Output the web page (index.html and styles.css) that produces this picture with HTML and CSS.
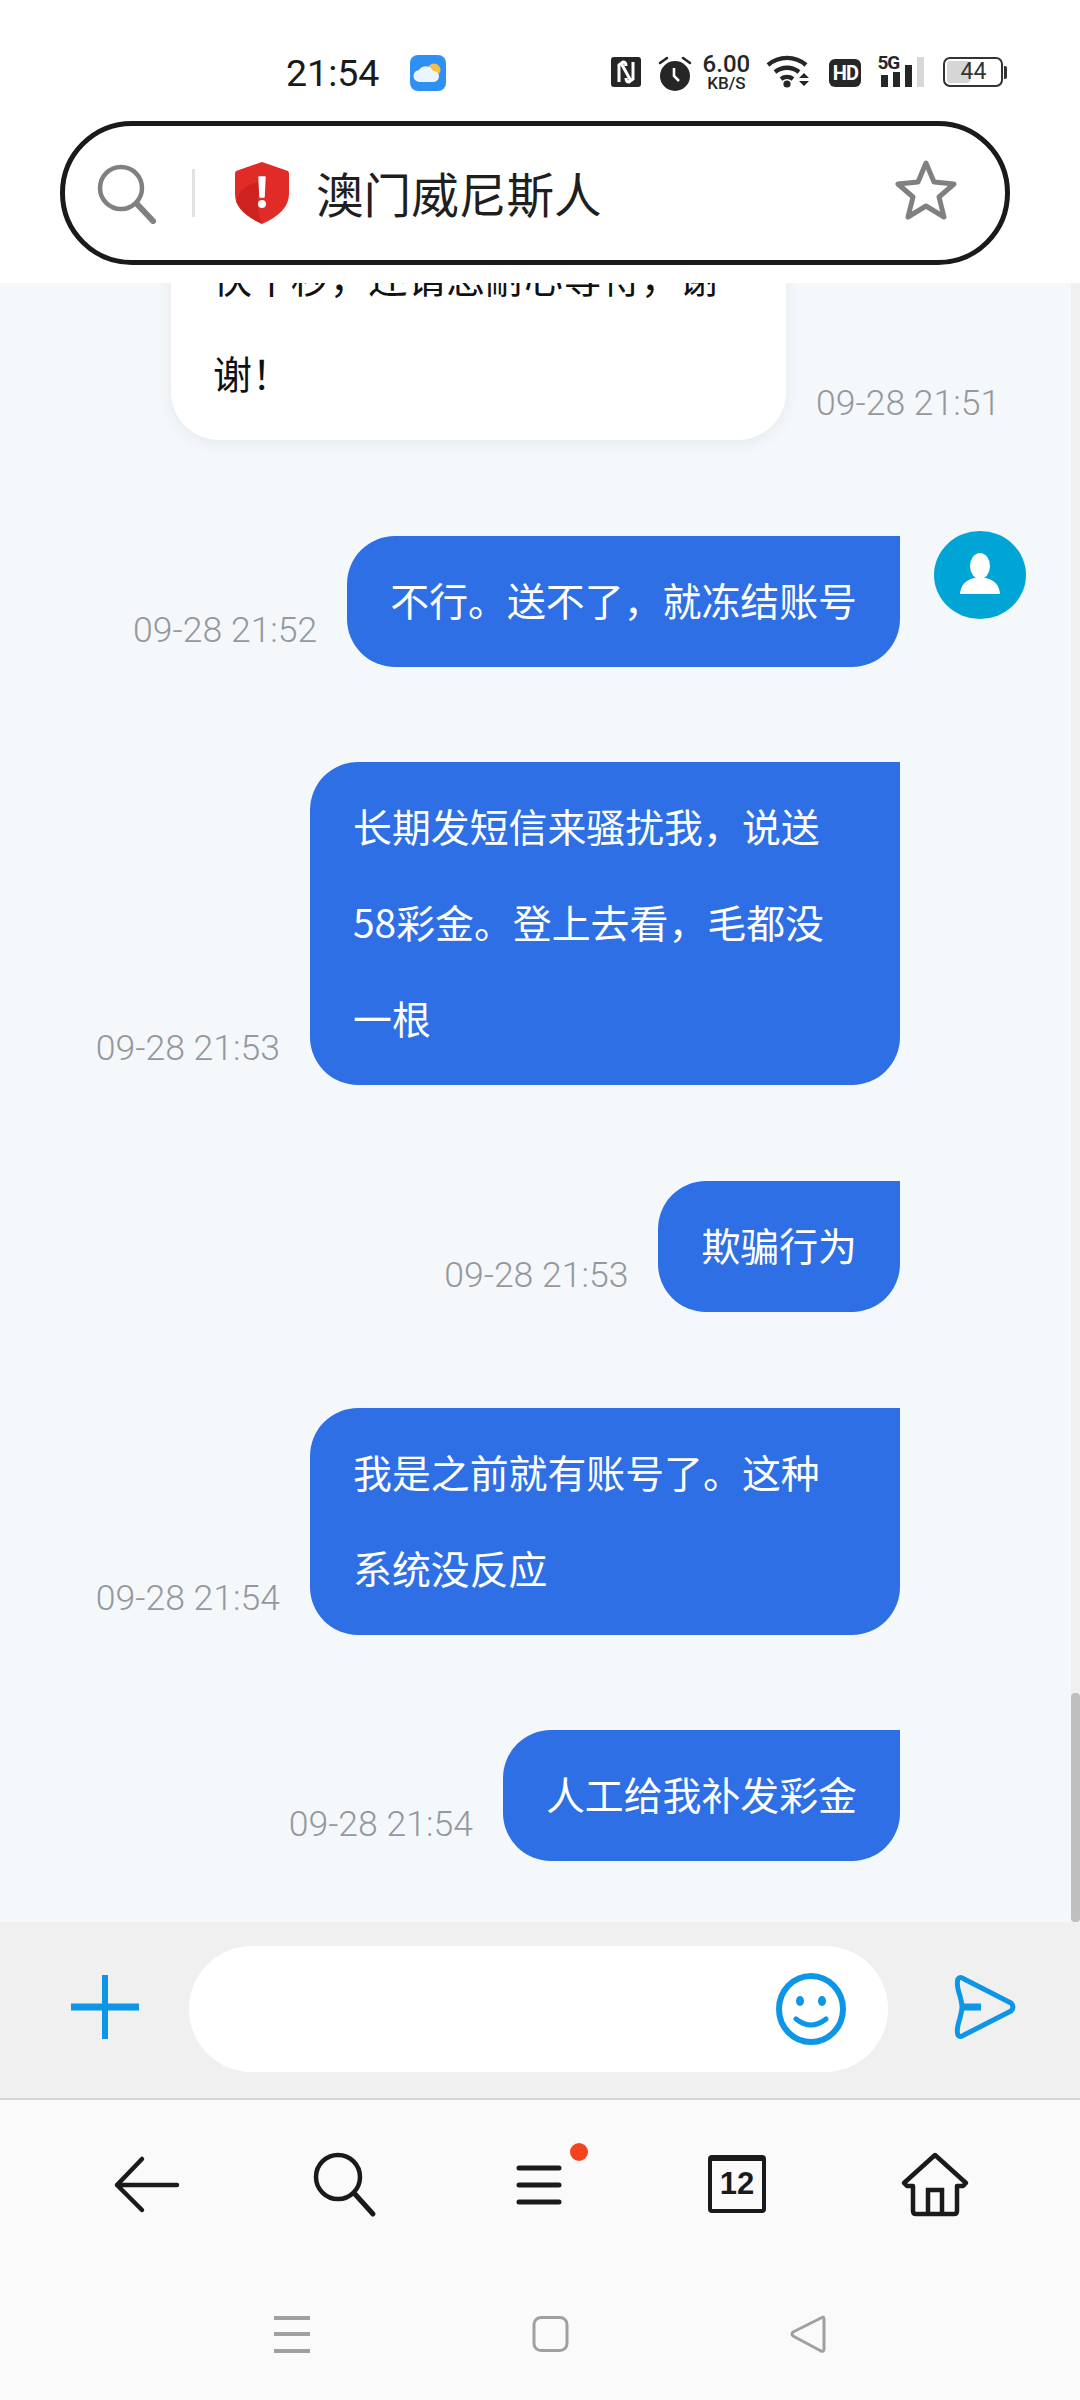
FILE: index.html
```html
<!DOCTYPE html>
<html lang="zh-CN">
<head>
    <meta charset="UTF-8">
    <meta name="viewport" content="width=device-width, initial-scale=1.0">
    <title>澳门威尼斯人</title>
    <link rel="stylesheet" href="styles.css">
</head>
<body>
    <!-- Barre d'état + barre d'adresse -->
    <header class="top">
        <div class="status">
            <span class="clock">21:54</span>
            <svg class="st-weather" width="36" height="36" viewBox="0 0 36 36">
                <rect width="36" height="36" rx="8" fill="#2e8ff5"/>
                <circle cx="24" cy="15" r="6.500" fill="#f5bf42"/>
                <path d="M10 27a6 6 0 0 1-1-12 8 8 0 0 1 14 1 5.500 5.500 0 0 1 1 11z" fill="#eaf5ff"/>
            </svg>
            <div class="status-right">
                <svg width="30" height="30" viewBox="0 0 30 30">
                    <rect width="30" height="30" rx="3" fill="#262626"/>
                    <path d="M8 25V8l4-3q3 0 3 4M22 5v17l-4 3q-3 0-3-4M10 6l10 18" fill="none" stroke="#fff" stroke-width="3"/>
                </svg>
                <svg class="st-alarm" width="34" height="36" viewBox="0 0 34 36">
                    <circle cx="17" cy="21" r="15" fill="#262626"/>
                    <path d="M2 8l7-5M32 8l-7-5" stroke="#262626" stroke-width="2.600" stroke-linecap="round"/>
                    <path d="M16 13v8l5 5" fill="none" stroke="#fff" stroke-width="2.600"/>
                </svg>
                <div class="speed"><span class="speed-num">6.00</span><span class="speed-unit">KB/S</span></div>
                <svg class="st-wifi" width="46" height="34" viewBox="0 0 46 34">
                    <g fill="none" stroke="#262626" stroke-width="4.400">
                        <path d="M2 11a29 29 0 0 1 38 0"/>
                        <path d="M9 18a19 19 0 0 1 24 0"/>
                        <path d="M15 25a10 10 0 0 1 12 0"/>
                    </g>
                    <circle cx="21" cy="30" r="3.600" fill="#262626"/>
                    <path d="M33 24l5-5 5 5zM33 27l5 5 5-5z" fill="#262626"/>
                </svg>
                <span class="st-hd">HD</span>
                <div class="signal">
                    <span class="signal-5g">5G</span>
                    <i class="bar bar-1"></i><i class="bar bar-2"></i><i class="bar bar-3"></i><i class="bar bar-4"></i>
                </div>
                <div class="battery">
                    <div class="battery-box"><div class="battery-fill" style="width:44%"></div><span class="battery-num">44</span></div>
                    <i class="battery-tip"></i>
                </div>
            </div>
        </div>

        <div class="addr">
            <svg class="addr-search" width="60" height="60" viewBox="0 0 60 60">
                <circle cx="25" cy="24" r="21" fill="none" stroke="#808080" stroke-width="4.500"/>
                <path d="M41 40l16 17" stroke="#808080" stroke-width="6" stroke-linecap="round"/>
            </svg>
            <i class="addr-sep"></i>
            <svg class="addr-shield" width="54" height="62" viewBox="0 0 54 62">
                <path d="M27 0l26 9q1 1 1 3v20q0 18-27 30Q0 50 0 32V12q0-2 1-3z" fill="#e02b27"/>
                <path d="M1 40Q6 20 32 19 16 30 27 62 6 52 1 40z" fill="#bf1c1c" opacity=".55"/>
                <path d="M24 15h6l-1 20h-4z" fill="#fff" stroke="#fff" stroke-width="1.500" stroke-linejoin="round"/>
                <circle cx="27" cy="42" r="4" fill="#fff"/>
            </svg>
            <span class="addr-title">澳门威尼斯人</span>
            <svg class="addr-star" width="62" height="60" viewBox="0 0 62 60">
                <path d="M31 3l8 19 20 2-15 13 5 20-18-11-18 11 5-20L3 24l20-2z" fill="none" stroke="#808080" stroke-width="5" stroke-linejoin="round"/>
            </svg>
        </div>
    </header>

    <!-- Messages -->
    <main class="chat">
        <div class="msgs">
            <div class="row row-in">
                <div class="bubble bubble-in">快十秒，还请您耐心等待，谢谢！</div>
                <span class="time">09-28 21:51</span>
            </div>
            <div class="row row-first">
                <span class="time">09-28 21:52</span>
                <div class="bubble bubble-out">不行。送不了，就冻结账号</div>
                <div class="avatar-slot">
                    <svg class="avatar" width="92" height="88" viewBox="0 0 92 88">
                        <ellipse cx="46" cy="44" rx="46" ry="44" fill="#00a5d6"/>
                        <ellipse cx="46" cy="35" rx="10" ry="13" fill="#fff"/>
                        <path d="M26 63q1-13 14-16h12q13 3 14 16z" fill="#fff"/>
                    </svg>
                </div>
            </div>
            <div class="row">
                <span class="time">09-28 21:53</span>
                <div class="bubble bubble-out bubble-wide">长期发短信来骚扰我，说送58彩金。登上去看，毛都没一根</div>
                <div class="avatar-slot"></div>
            </div>
            <div class="row">
                <span class="time">09-28 21:53</span>
                <div class="bubble bubble-out">欺骗行为</div>
                <div class="avatar-slot"></div>
            </div>
            <div class="row">
                <span class="time">09-28 21:54</span>
                <div class="bubble bubble-out bubble-wide">我是之前就有账号了。这种系统没反应</div>
                <div class="avatar-slot"></div>
            </div>
            <div class="row">
                <span class="time">09-28 21:54</span>
                <div class="bubble bubble-out">人工给我补发彩金</div>
                <div class="avatar-slot"></div>
            </div>
        </div>
        <div class="scroll-track"><div class="scroll-thumb"></div></div>
    </main>

    <!-- Saisie -->
    <section class="composer">
        <svg class="cp-plus" width="68" height="64" viewBox="0 0 68 64">
            <path d="M34 0v64" stroke="#0d96e8" stroke-width="6"/>
            <path d="M0 32h68" stroke="#0d96e8" stroke-width="7"/>
        </svg>
        <div class="cp-input">
            <svg width="70" height="72" viewBox="0 0 70 72">
                <ellipse cx="35" cy="36" rx="32" ry="33" fill="none" stroke="#0d96e8" stroke-width="6"/>
                <ellipse cx="24" cy="28" rx="4" ry="5" fill="#0d96e8"/>
                <ellipse cx="46" cy="28" rx="4" ry="5" fill="#0d96e8"/>
                <path d="M20 46q15 12 30 0" fill="none" stroke="#0d96e8" stroke-width="5" stroke-linecap="round"/>
            </svg>
        </div>
        <svg class="cp-send" width="64" height="64" viewBox="0 0 64 64">
            <path d="M5 4q2-3 6 0l47 24q4 4 0 8L11 60q-4 3-6 0-2-5 2-17 2-8 2-11t-2-11Q3 9 5 4z" fill="none" stroke="#0d96e8" stroke-width="5" stroke-linejoin="round"/>
            <path d="M9 32h19" stroke="#0d96e8" stroke-width="7"/>
        </svg>
    </section>

    <!-- Barre d'outils du navigateur -->
    <nav class="toolbar">
        <svg width="72" height="72" viewBox="0 0 72 72">
            <path d="M66 36H6M31 10L6 36l25 25" fill="none" stroke="#1a1a1a" stroke-width="4.500" stroke-linecap="round" stroke-linejoin="round"/>
        </svg>
        <svg width="72" height="72" viewBox="0 0 72 72">
            <circle cx="30" cy="28" r="22" fill="none" stroke="#1a1a1a" stroke-width="4.500"/>
            <path d="M46 44l19 21" stroke="#1a1a1a" stroke-width="5" stroke-linecap="round"/>
        </svg>
        <div class="menu-icon">
            <svg width="72" height="72" viewBox="0 0 72 72">
                <path d="M14 19h40M14 36h40M14 53h40" stroke="#1a1a1a" stroke-width="5" stroke-linecap="round"/>
            </svg>
            <i class="menu-dot"></i>
        </div>
        <div class="tabs-icon"><span>12</span></div>
        <svg width="72" height="72" viewBox="0 0 72 72">
            <path d="M5 34L36 6l31 28-3 3h-6v25q0 3-3 3H17q-3 0-3-3V37H8z" fill="none" stroke="#1a1a1a" stroke-width="4.500" stroke-linejoin="round"/>
            <path d="M29 65V41h14v24" fill="none" stroke="#1a1a1a" stroke-width="4.500"/>
        </svg>
    </nav>

    <!-- Navigation système -->
    <footer class="sysnav">
        <svg width="40" height="40" viewBox="0 0 40 40">
            <path d="M2 4h36M2 20h36M2 37h36" stroke="#a0a0a0" stroke-width="4"/>
        </svg>
        <svg width="40" height="40" viewBox="0 0 40 40">
            <rect x="4" y="3.500" width="33" height="33" rx="7" fill="none" stroke="#a0a0a0" stroke-width="3"/>
        </svg>
        <svg width="40" height="40" viewBox="0 0 40 40">
            <path d="M36 5q0-3-3-1L5 18q-2 2 0 4l28 15q3 1 3-2z" fill="none" stroke="#a0a0a0" stroke-width="3" stroke-linejoin="round"/>
        </svg>
    </footer>
</body>
</html>
```

FILE: styles.css
```css
:root {
    --bubble-blue: #2e6fe5;
    --chat-bg: #f4f8fb;
    --text-dark: #262626;
    --time-grey: #94989d;
}

* {
    box-sizing: border-box;
}

body {
    margin: 0;
    width: 1080px;
    height: 2400px;
    display: flex;
    flex-direction: column;
    overflow: hidden;
    background: #fafafa;
    font-family: "Noto Sans CJK SC", "Noto Sans", sans-serif;
}

.top {
    height: 283px;
    background: #fff;
    position: relative;
    z-index: 2;
}

/* Barre d'état */
.status {
    height: 121px;
    padding: 54px 0 0 286px;
    display: flex;
    align-items: flex-start;
}

.clock {
    font-family: Roboto, sans-serif;
    font-size: 37.500px;
    font-weight: 400;
    line-height: 38px;
    color: #1a1a1a;
}

.st-weather {
    margin: 1px 0 0 31px;
}

.status-right {
    margin-left: 165px;
    display: flex;
    align-items: flex-start;
    color: var(--text-dark);
    font-family: Roboto, sans-serif;
}

.status-right svg {
    margin-top: 3px;
}

.status-right .st-alarm {
    margin: 1px 0 0 17px;
}

.speed {
    margin-left: 8px;
    width: 52px;
    display: flex;
    flex-direction: column;
    align-items: center;
}

.speed-num {
    font-size: 24px;
    font-weight: 500;
    line-height: 21px;
}

.speed-unit {
    font-size: 17px;
    font-weight: 500;
    line-height: 16px;
}

.status-right .st-wifi {
    margin: 0 0 0 14px;
}

.st-hd {
    margin: 5px 0 0 17px;
    width: 32px;
    height: 28px;
    border-radius: 6px;
    background: var(--text-dark);
    color: #fff;
    font-size: 20px;
    font-weight: 700;
    line-height: 28px;
    letter-spacing: -1px;
    text-align: center;
}

.signal {
    margin: 2px 0 0 16px;
    width: 47px;
    height: 31px;
    display: flex;
    align-items: flex-end;
    gap: 5px;
    position: relative;
}

.signal-5g {
    position: absolute;
    left: 0;
    top: -3px;
    font-size: 19px;
    font-weight: 700;
    line-height: 19px;
    letter-spacing: -1px;
}

.bar {
    width: 7px;
    background: var(--text-dark);
}

.bar-1 { height: 12px; margin-left: 4px; }
.bar-2 { height: 15px; }
.bar-3 { height: 22px; }
.bar-4 { height: 30px; background: #d8d8d8; }

.battery {
    margin: 3px 0 0 19px;
    display: flex;
    align-items: center;
}

.battery-box {
    width: 60px;
    height: 30px;
    border: 2.500px solid #333;
    border-radius: 7px;
    padding: 2px;
    position: relative;
}

.battery-fill {
    height: 100%;
    background: #d6d6d6;
    border-radius: 3px;
}

.battery-num {
    position: absolute;
    inset: 0;
    text-align: center;
    font-size: 23px;
    line-height: 25px;
    color: #333;
}

.battery-tip {
    width: 3px;
    height: 13px;
    margin-left: 1px;
    background: #333;
    border-radius: 0 2px 2px 0;
}

/* Barre d'adresse */
.addr {
    margin: 0 70px 0 60px;
    height: 144px;
    border: 5px solid #1a1a1a;
    border-radius: 72px;
    background: #fff;
    display: flex;
    align-items: center;
    padding: 0 48px 0 31px;
}

.addr-search {
    flex: none;
    margin-top: 2px;
}

.addr-sep {
    width: 3px;
    height: 48px;
    margin-left: 36px;
    background: #e2e2e2;
}

.addr-shield {
    flex: none;
    margin-left: 40px;
}

.addr-title {
    margin-left: 27px;
    font-size: 47.600px;
    line-height: 60px;
    color: #1f1f1f;
}

.addr-star {
    flex: none;
    margin: 0 0 6px auto;
}

/* Messages */
.chat {
    height: 1639px;
    background: var(--chat-bg);
    overflow: hidden;
    position: relative;
}

.msgs {
    margin-top: -70px;
    display: flex;
    flex-direction: column;
    gap: 95.700px;
}

.row {
    display: flex;
    justify-content: flex-end;
    align-items: flex-end;
}

.row-in {
    justify-content: flex-start;
    padding-left: 171px;
}

.bubble {
    padding: 15px 43px 20px;
    font-size: 38.900px;
    line-height: 96px;
    border-radius: 48px;
}

.bubble-in {
    width: 615px;
    padding-left: 42px;
    background: #fff;
    color: #111;
    box-shadow: 0 4px 14px rgba(60, 80, 100, 0.08);
}

.bubble-out {
    background: var(--bubble-blue);
    color: #fff;
    border-top-right-radius: 0;
}

.bubble-wide {
    width: 590px;
}

.time {
    margin: 0 30px 17px;
    font-family: Roboto, sans-serif;
    font-size: 35.600px;
    font-weight: 300;
    line-height: 40px;
    color: var(--time-grey);
    white-space: nowrap;
}

.avatar-slot {
    width: 180px;
    flex: none;
    align-self: flex-start;
}

.avatar {
    display: block;
    margin: -5px 0 0 34px;
}

.scroll-track {
    position: absolute;
    top: 0;
    bottom: 0;
    right: 0;
    width: 9px;
    background: #f0f0f0;
}

.scroll-thumb {
    position: absolute;
    right: 0;
    bottom: 0;
    width: 9px;
    height: 229px;
    background: #bfbfbf;
    border-radius: 4px;
}

/* Saisie */
.composer {
    height: 178px;
    background: #f0f0f0;
    border-bottom: 2px solid #d4d4d4;
    display: flex;
    align-items: flex-start;
    padding: 24px 0 0 71px;
}

.cp-plus {
    flex: none;
    margin-top: 29px;
}

.cp-input {
    width: 699px;
    height: 126px;
    margin-left: 50px;
    padding: 27px 42px 0 0;
    border-radius: 63px;
    background: #fff;
    display: flex;
    justify-content: flex-end;
}

.cp-send {
    flex: none;
    margin: 29px 0 0 65px;
}

/* Barre d'outils */
.toolbar {
    padding: 49px 0 0 111px;
    display: flex;
    gap: 125px;
}

.menu-icon {
    position: relative;
    width: 72px;
    height: 72px;
}

.menu-dot {
    position: absolute;
    left: 65px;
    top: -6px;
    width: 18px;
    height: 18px;
    border-radius: 50%;
    background: #f4431f;
}

.tabs-icon {
    width: 58px;
    height: 58px;
    margin: 6px 8px 6px 6px;
    border: 4px solid #1a1a1a;
    border-top-width: 6px;
    border-radius: 4px;
    text-align: center;
    font-family: "Liberation Sans", sans-serif;
    font-size: 31px;
    font-weight: 700;
    line-height: 46px;
    color: #1a1a1a;
}

/* Navigation système */
.sysnav {
    margin-top: 93px;
    padding-left: 272px;
    display: flex;
    gap: 218px;
}
```
